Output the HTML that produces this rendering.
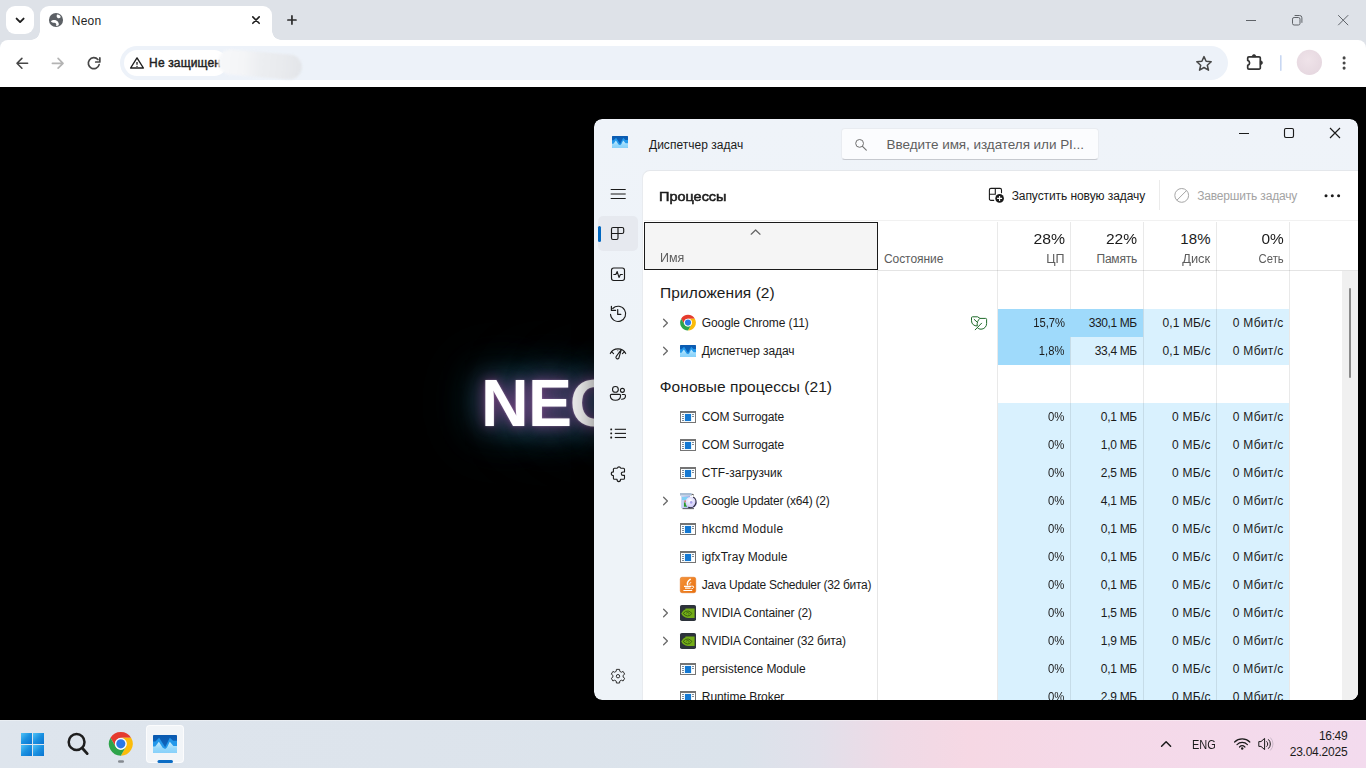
<!DOCTYPE html>
<html lang="ru">
<head>
<meta charset="utf-8">
<title>Neon</title>
<style>
*{box-sizing:border-box;margin:0;padding:0}
html,body{width:1366px;height:768px;overflow:hidden;background:#000;font-family:"Liberation Sans",sans-serif;}
.abs{position:absolute}
.t{position:absolute;white-space:nowrap;line-height:1}
svg{position:absolute;overflow:visible}
#tabstrip{left:0;top:0;width:1366px;height:50px;background:#dee2e8}
#toolbar{left:0;top:40px;width:1366px;height:47px;background:#fff;border-radius:8px 8px 0 0}
#tabsearch{left:6px;top:6px;width:28px;height:28px;border-radius:9px;background:#fff}
#tab{left:40px;top:6px;width:232px;height:34px;background:#fff;border-radius:9px 9px 0 0}
#tab:before,#tab:after{content:"";position:absolute;bottom:0;width:9px;height:9px}
#tab:before{left:-9px;background:radial-gradient(circle at 0 0,rgba(255,255,255,0) 8.500px,#fff 9px)}
#tab:after{right:-9px;background:radial-gradient(circle at 100% 0,rgba(255,255,255,0) 8.500px,#fff 9px)}
#omni{left:120px;top:46px;width:1107.500px;height:34px;border-radius:17px;background:#edf2f9}
#chip{left:124px;top:50px;width:103px;height:25.500px;border-radius:13px;background:#fff}
#blur{left:218px;top:52.300px;width:83.500px;height:25px;border-radius:12.500px;background:linear-gradient(90deg,#f7f8fa 0%,#f4f5f7 30%,#eceef1 50%,#e9ebee 75%,#e3e5e9 100%);filter:blur(1.200px);transform:rotate(4.800deg)}
#page{left:0;top:87px;width:1366px;height:633px;background:#000;overflow:hidden}
.neon{left:481px;top:283px;font-size:66px;font-weight:bold}
#neonA{color:transparent;text-shadow:0 0 38px rgba(0,175,190,.72),0 0 62px rgba(0,155,170,.58)}
#neonB{color:transparent;text-shadow:0 0 2px rgba(255,225,255,.4),0 0 12px rgba(200,75,170,.4),0 0 24px rgba(175,55,150,.65)}
#neon2{color:#fff}
#tm{left:0;top:0;width:1366px;height:768px;clip-path:inset(119px 8px 68px 594px round 8px)}
#taskbar{left:0;top:720px;width:1366px;height:48px;background:linear-gradient(90deg,#dee5ed 0%,#dde4ec 30%,#dbe3eb 54%,#e2e0ea 60%,#efdae6 65.500%,#f6d8e4 71%,#f5d9e8 80%,#f4daeb 90%,#f3dbee 100%);border-top:1px solid rgba(255,255,255,.35)}
#tmshadow{left:594px;top:119px;width:764px;height:581px;border-radius:8px;box-shadow:0 2px 16px 6px rgba(0,0,0,.28)}

</style>
</head>
<body>
<!-- CHROME -->
<div id="tabstrip" class="abs"></div>
<div id="toolbar" class="abs"></div>
<div id="tabsearch" class="abs"></div>
<div id="tab" class="abs"></div>
<div id="omni" class="abs"></div>
<div id="chip" class="abs"></div>
<svg style="left:0px;top:0px" width="320" height="87" viewBox="0 0 320 87" ><path d="M16.6 18.6 L20.1 22.1 L23.6 18.6" fill="none" stroke="#1f1f1f" stroke-width="1.9" stroke-linecap="round" stroke-linejoin="round"/><circle cx="56" cy="19.950" r="7.050" fill="#5c6065"/><path d="M57 14.600 C58.800 14.400 60.500 15.600 60.700 17.200 C59.900 18.200 58.600 18.500 57.600 18 C56.500 17.300 56.400 15.900 57 14.600Z" fill="#fff"/><path d="M50.800 21.300 C52.200 19.900 54.600 19.700 56.300 20.500 C58.200 21.400 59.100 23.300 58.800 25 C58 25.700 57 26 56.100 25.900 C56.800 24.300 55.900 23 54.300 22.800 C52.900 22.800 51.600 22.400 50.800 21.300Z" fill="#fff"/><path d="M252.800 16.900 L259.200 23.300 M259.200 16.900 L252.800 23.300" stroke="#1f1f1f" stroke-width="1.6" stroke-linecap="round"/><path d="M287.900 20 H296 M291.950 15.900 V24.100" stroke="#2b2b2b" stroke-width="1.7" stroke-linecap="round"/><path d="M27.6 63.3 H17.2 M21.9 58.4 L17 63.3 L21.9 68.2" fill="none" stroke="#474747" stroke-width="1.6" stroke-linecap="round" stroke-linejoin="round"/><path d="M52.4 63.3 H62.8 M58.1 58.4 L63 63.3 L58.1 68.2" fill="none" stroke="#b4b4b4" stroke-width="1.700" stroke-linecap="round" stroke-linejoin="round"/><path d="M99.150 64.600 A5.500 5.500 0 1 1 97.900 59.500" fill="none" stroke="#474747" stroke-width="1.700" stroke-linecap="round"/><path d="M99.850 57.900 V62 H95.700" fill="none" stroke="#474747" stroke-width="1.700" stroke-linecap="round" stroke-linejoin="round"/><path d="M137 57.900 L143.400 68 H130.600 Z" fill="none" stroke="#1f1f1f" stroke-width="1.4" stroke-linejoin="round"/><path d="M137 62 V64.8" stroke="#1f1f1f" stroke-width="1.3"/><circle cx="137" cy="66.4" r="0.7" fill="#1f1f1f"/></svg>
<div class="t" style="top:15px;font-size:12px;color:#1f1f1f;letter-spacing:0.20px;left:71.8px;">Neon</div>
<div class="t" style="top:57px;font-size:12px;color:#1f1f1f;letter-spacing:0.14px;left:149.1px;-webkit-text-stroke:0.450px #1f1f1f;">Не защищен</div>
<div id="blur" class="abs"></div>
<svg style="left:1180px;top:0px" width="186" height="87" viewBox="0 0 186 87" ><path d="M66 20.5 H76" stroke="#5f6368" stroke-width="1"/><rect x="112.5" y="17.5" width="7.5" height="7.5" rx="1.6" fill="none" stroke="#5f6368" stroke-width="1"/><path d="M114.6 15.5 H119.6 a2.3 2.3 0 0 1 2.3 2.3 V22.8" fill="none" stroke="#5f6368" stroke-width="1"/><path d="M158.2 15.2 L168.2 25.2 M168.2 15.2 L158.2 25.2" stroke="#5f6368" stroke-width="1"/><path d="M24 56.6 L26.1 61.3 L31.2 61.8 L27.3 65.2 L28.5 70.2 L24 67.5 L19.5 70.2 L20.7 65.2 L16.8 61.8 L21.9 61.3 Z" fill="none" stroke="#474747" stroke-width="1.5" stroke-linejoin="round"/><path d="M68.900 56.800 H79.100 a1.200 1.200 0 0 1 1.200 1.200 V67.900 a1.200 1.200 0 0 1 -1.200 1.200 H68.900 a1.200 1.200 0 0 1 -1.200 -1.200 V65.400 a2.600 2.600 0 0 0 0 -5 V58 a1.200 1.200 0 0 1 1.200 -1.200Z" fill="none" stroke="#333" stroke-width="1.700" stroke-linejoin="round"/><path d="M72.100 56.800 a1.900 2.400 0 0 1 3.800 0Z M80.300 60.800 a2.300 1.900 0 0 1 0 3.800Z" fill="#333" stroke="#333" stroke-width="0.600"/><rect x="100" y="55" width="1.6" height="16" rx="0.8" fill="#c8d7f2"/><defs><radialGradient id="av" cx="0.45" cy="0.4" r="0.6"><stop offset="0" stop-color="#efe3e9"/><stop offset="1" stop-color="#e6d8e0"/></radialGradient></defs><circle cx="129.4" cy="62.3" r="12.6" fill="url(#av)"/><circle cx="164.1" cy="57.9" r="1.55" fill="#474747"/><circle cx="164.1" cy="63" r="1.55" fill="#474747"/><circle cx="164.1" cy="68.1" r="1.55" fill="#474747"/></svg>
<!-- PAGE -->
<div id="page" class="abs"><div id="neonA" class="t neon"><span style="letter-spacing:-0.600px">N</span><span style="letter-spacing:-2.400px">E</span>ON</div><div id="neonB" class="t neon"><span style="letter-spacing:-0.600px">N</span><span style="letter-spacing:-2.400px">E</span>ON</div><div id="neon2" class="t neon"><span style="letter-spacing:-0.600px">N</span><span style="letter-spacing:-2.400px">E</span><span style="color:#e6e6e6">ON</span></div></div>
<!-- TASK MANAGER -->
<div id="tmshadow" class="abs"></div>
<div id="tm" class="abs">
<div class="abs" style="left:594px;top:119px;width:764px;height:581px;background:linear-gradient(180deg,#eff3f9 0%,#eef3f8 40%);border-radius:8px;"></div>
<div class="abs" style="left:642px;top:170px;width:716px;height:531px;background:#fff;border-radius:8px 0 0 0;border-top:1px solid #e4e7eb;border-left:1px solid #e8ebef;"></div>
<div class="abs" style="left:840.5px;top:128px;width:258.5px;height:31.5px;background:#fbfcfe;border-radius:4px;border:1px solid #e9ecf1;border-bottom:1px solid #c6c9cf;"></div>
<div class="abs" style="left:598px;top:216px;width:40px;height:35px;background:#e6e9ef;border-radius:5px;"></div>
<div class="abs" style="left:598px;top:226px;width:3px;height:16px;background:#0067c0;border-radius:1.5px;"></div>
<svg style="left:0px;top:0px" width="1366" height="768" viewBox="0 0 1366 768" ><defs><linearGradient id="tga" x1="0" y1="0" x2="0" y2="1"><stop offset="0" stop-color="#0a5ab0"/><stop offset="1" stop-color="#136bc3"/></linearGradient><linearGradient id="tla" x1="0" y1="0" x2="0" y2="1"><stop offset="0" stop-color="#c9eeff"/><stop offset="0.600" stop-color="#93d7fb"/><stop offset="1" stop-color="#88d1fa"/></linearGradient></defs><rect x="612" y="136" width="16" height="12" rx="0.50" fill="url(#tga)"/><path d="M612.00 140.30 L613.60 140.30 L616.10 137.80 L620.10 144.10 L623.20 137.80 L625.40 139.90 L628.00 139.90 L628.00 148.00 L612.00 148.00Z" fill="#2398ea"/><path d="M612.00 143.70 L613.50 143.70 L615.90 140.50 L618.50 144.50 L620.10 145.30 L621.30 144.30 L623.20 140.50 L625.60 143.30 L628.00 143.30 L628.00 147.60 Q628.00 148.00 627.60 148.00 L612.40 148.00 Q612.00 148.00 612.00 147.60Z" fill="url(#tla)"/><circle cx="859.6" cy="143.4" r="3.9" fill="none" stroke="#6f6f6f" stroke-width="1"/><path d="M862.5 146.3 L866.3 150.1" stroke="#6f6f6f" stroke-width="1.1" stroke-linecap="round"/><path d="M1239 133.500 H1249" stroke="#1b1b1b" stroke-width="1.150"/><rect x="1284.5" y="128.5" width="9" height="9" rx="1.400" fill="none" stroke="#1b1b1b" stroke-width="1.150"/><path d="M1330 128 L1340 138 M1340 128 L1330 138" stroke="#1b1b1b" stroke-width="1.150"/><path d="M610.700 189.500 H625.700 M610.700 194 H625.700 M610.700 198.500 H625.700" stroke="#1b1b1b" stroke-width="1.150"/><path d="M613 227.5 H622.2 a1.5 1.5 0 0 1 1.5 1.5 V232 a1.5 1.5 0 0 1 -1.5 1.5 H618 V238 a1.5 1.5 0 0 1 -1.5 1.5 H613 a1.5 1.5 0 0 1 -1.5 -1.5 V229 a1.5 1.5 0 0 1 1.5 -1.5Z M618 227.500 V233.500 M611.500 233.500 H618" fill="none" stroke="#1b1b1b" stroke-width="1.150"/><rect x="611.5" y="268" width="13" height="12.5" rx="2.200" fill="none" stroke="#1b1b1b" stroke-width="1.150"/><path d="M613.8 274.5 H615.8 L617.2 271.6 L619 277.4 L620.4 274.5 H622.400" fill="none" stroke="#1b1b1b" stroke-width="1.150" stroke-linejoin="round" stroke-linecap="round"/><path d="M610.500 314.300 A7.600 7.600 0 1 0 612.700 308.500" fill="none" stroke="#1b1b1b" stroke-width="1.100" stroke-linecap="round"/><path d="M611.400 306.300 V310.400 H615.600" fill="none" stroke="#1b1b1b" stroke-width="1.200" stroke-linecap="round" stroke-linejoin="round"/><path d="M617.700 309.500 V314.400 H620.800" fill="none" stroke="#1b1b1b" stroke-width="1.200" stroke-linecap="round" stroke-linejoin="round"/><path d="M610.300 353.600 A8.600 8.600 0 0 1 625.700 353.600" fill="none" stroke="#1b1b1b" stroke-width="1.100" stroke-linecap="round"/><path d="M611.600 351.800 L613.600 353.700 M624.400 351.800 L622.400 353.700" fill="none" stroke="#1b1b1b" stroke-width="1.100" stroke-linecap="round"/><path d="M617.800 349.200 V351.300" stroke="#7a7a7a" stroke-width="1"/><path d="M621.300 349.500 L616.300 356.300 a1.550 1.550 0 1 0 2.700 1.300 Z" fill="none" stroke="#1b1b1b" stroke-width="1.100" stroke-linejoin="round"/><circle cx="615.400" cy="389.400" r="2.900" fill="none" stroke="#1b1b1b" stroke-width="1.100"/><path d="M611.500 394.400 H619.400 a1.200 1.200 0 0 1 1.200 1.200 c0 3 -2.200 4.700 -5.150 4.700 s-5.150 -1.700 -5.150 -4.700 a1.200 1.200 0 0 1 1.200 -1.200Z" fill="none" stroke="#1b1b1b" stroke-width="1.100"/><circle cx="622.400" cy="390.350" r="2" fill="none" stroke="#1b1b1b" stroke-width="1.100"/><path d="M622.300 394.500 H624.300 a1.200 1.200 0 0 1 1.200 1.200 c0 2.200 -1.600 3.400 -3.900 3.600" fill="none" stroke="#1b1b1b" stroke-width="1.100" stroke-linecap="round"/><rect x="610.3" y="428.40000000000003" width="1.8" height="1.8" rx="0.5" fill="#1b1b1b"/><path d="M614.8 429.3 H626" stroke="#1b1b1b" stroke-width="1.1"/><rect x="610.3" y="432.5" width="1.8" height="1.8" rx="0.5" fill="#1b1b1b"/><path d="M614.8 433.4 H626" stroke="#1b1b1b" stroke-width="1.1"/><rect x="610.3" y="436.6" width="1.8" height="1.8" rx="0.5" fill="#1b1b1b"/><path d="M614.8 437.5 H626" stroke="#1b1b1b" stroke-width="1.1"/><path d="M614.400 468.200 H617.300 A1.800 1.900 0 0 1 620.700 468.200 H623.500 a1 1 0 0 1 1 1 V472 H623 a1.700 1.700 0 0 0 0 3.400 H624.500 V478.300 a1 1 0 0 1 -1 1 H620.600 A1.800 2.300 0 0 1 617 479.300 H614.400 a1 1 0 0 1 -1 -1 V475.500 A2.100 1.800 0 0 1 613.400 471.900 V469.200 a1 1 0 0 1 1 -1Z" fill="none" stroke="#1b1b1b" stroke-width="1.100" stroke-linejoin="round"/><path d="M619.57 669.38 L616.43 669.38 L616.22 671.31 L614.66 672.22 L612.88 671.43 L611.31 674.15 L612.88 675.30 L612.88 677.10 L611.31 678.25 L612.88 680.97 L614.66 680.18 L616.22 681.09 L616.43 683.02 L619.57 683.02 L619.78 681.09 L621.34 680.18 L623.12 680.97 L624.69 678.25 L623.12 677.10 L623.12 675.30 L624.69 674.15 L623.12 671.43 L621.34 672.22 L619.78 671.31Z" fill="none" stroke="#303030" stroke-width="1" stroke-linejoin="round"/><circle cx="618" cy="676.200" r="1.700" fill="none" stroke="#303030" stroke-width="1"/><path d="M993.700 200.400 H990.900 a1.500 1.500 0 0 1 -1.500 -1.500 V189.900 a1.500 1.500 0 0 1 1.500 -1.500 H1000 a1.500 1.500 0 0 1 1.500 1.500 V192.700 M995.300 188.400 V194.250 H989.400" fill="none" stroke="#1b1b1b" stroke-width="1.100" stroke-linecap="round"/><circle cx="999.600" cy="198.400" r="4.300" fill="#1b1b1b"/><path d="M997.100 198.400 H1002.100 M999.600 195.900 V200.900" stroke="#fff" stroke-width="1.100"/><path d="M1159.500 180 V210" stroke="#ebebeb" stroke-width="1"/><circle cx="1181.700" cy="195.400" r="6.900" fill="none" stroke="#a6a6a6" stroke-width="1"/><path d="M1186.600 190.500 L1176.800 200.300" stroke="#a6a6a6" stroke-width="1"/><circle cx="1326" cy="195.800" r="1.500" fill="#1b1b1b"/><circle cx="1332.3" cy="195.800" r="1.500" fill="#1b1b1b"/><circle cx="1338.6" cy="195.800" r="1.500" fill="#1b1b1b"/></svg>
<div class="t" style="top:139px;font-size:12px;color:#1b1b1b;letter-spacing:0.02px;left:649.0px;">Диспетчер задач</div>
<div class="t" style="top:138px;font-size:13.5px;color:#5f5f5f;letter-spacing:-0.05px;left:886.6px;">Введите имя, издателя или PI...</div>
<div class="t" style="top:190px;font-size:13.5px;color:#1b1b1b;left:658.7px;transform:scaleX(1.071);transform-origin:0 0;-webkit-text-stroke:0.550px #1b1b1b;">Процессы</div>
<div class="t" style="top:190px;font-size:12px;color:#1b1b1b;letter-spacing:-0.08px;left:1011.7px;">Запустить новую задачу</div>
<div class="t" style="top:190px;font-size:12px;color:#a3a3a3;letter-spacing:-0.18px;left:1197.2px;">Завершить задачу</div>
<div class="abs" style="left:644px;top:222px;width:234px;height:48px;background:#f5f5f5;border:1px solid #1a1a1a;"></div>
<div class="abs" style="left:1342px;top:271px;width:16px;height:430px;background:#f0f0f0;"></div>
<div class="abs" style="left:1349px;top:288px;width:2px;height:90px;background:#8a8a8a;border-radius:1px;"></div>
<div class="abs" style="left:998px;top:309px;width:145px;height:56px;background:#d9f1fe;"></div>
<div class="abs" style="left:1143px;top:309px;width:146px;height:56px;background:#d9f1fe;"></div>
<div class="abs" style="left:998px;top:403px;width:291px;height:300px;background:#d9f1fe;"></div>
<svg style="left:0px;top:0px" width="1366" height="768" viewBox="0 0 1366 768" ><path d="M878 270.500 H1358" stroke="#e4e4e4" stroke-width="1"/><path d="M644 220.500 H1358" stroke="#f1f1f1" stroke-width="1"/><path d="M877.500 270 V700" stroke="#e6e6e6" stroke-width="1"/><path d="M997.5 222 V700" stroke="rgba(0,0,0,0.085)" stroke-width="1"/><path d="M1070.5 222 V700" stroke="rgba(0,0,0,0.085)" stroke-width="1"/><path d="M1143.5 222 V700" stroke="rgba(0,0,0,0.085)" stroke-width="1"/><path d="M1216.5 222 V700" stroke="rgba(0,0,0,0.085)" stroke-width="1"/><path d="M1289.5 222 V700" stroke="rgba(0,0,0,0.085)" stroke-width="1"/><path d="M751.200 234.200 L755.600 230 L760 234.200" fill="none" stroke="#666" stroke-width="1.250" stroke-linecap="round" stroke-linejoin="round"/><path d="M663.6 319.2 L667.4 323.0 L663.6 326.8" fill="none" stroke="#6b6b6b" stroke-width="1.300" stroke-linecap="round" stroke-linejoin="round"/><path d="M663.6 347.2 L667.4 351.0 L663.6 354.8" fill="none" stroke="#6b6b6b" stroke-width="1.300" stroke-linecap="round" stroke-linejoin="round"/><path d="M663.6 497.2 L667.4 501.0 L663.6 504.8" fill="none" stroke="#6b6b6b" stroke-width="1.300" stroke-linecap="round" stroke-linejoin="round"/><path d="M663.6 609.2 L667.4 613.0 L663.6 616.8000000000001" fill="none" stroke="#6b6b6b" stroke-width="1.300" stroke-linecap="round" stroke-linejoin="round"/><path d="M663.6 637.2 L667.4 641.0 L663.6 644.8000000000001" fill="none" stroke="#6b6b6b" stroke-width="1.300" stroke-linecap="round" stroke-linejoin="round"/><path d="M681.16 318.65 A7.9 7.9 0 0 1 694.84 318.65 L688.00 318.65 A3.95 3.95 0 0 0 684.58 324.58 Z" fill="#e53b2e"/><path d="M694.84 318.65 A7.9 7.9 0 0 1 688.00 330.50 L691.42 324.58 A3.95 3.95 0 0 0 688.00 318.65 Z" fill="#fbbc0a"/><path d="M688.00 330.50 A7.9 7.9 0 0 1 681.16 318.65 L684.58 324.58 A3.95 3.95 0 0 0 691.42 324.58 Z" fill="#2da44a"/><circle cx="688" cy="322.6" r="3.87" fill="#fff"/><circle cx="688" cy="322.6" r="3.04" fill="#2a78e6"/><defs><linearGradient id="tgb" x1="0" y1="0" x2="0" y2="1"><stop offset="0" stop-color="#0a5ab0"/><stop offset="1" stop-color="#136bc3"/></linearGradient><linearGradient id="tlb" x1="0" y1="0" x2="0" y2="1"><stop offset="0" stop-color="#c9eeff"/><stop offset="0.600" stop-color="#93d7fb"/><stop offset="1" stop-color="#88d1fa"/></linearGradient></defs><rect x="680" y="345" width="16" height="12" rx="0.50" fill="url(#tgb)"/><path d="M680.00 349.30 L681.60 349.30 L684.10 346.80 L688.10 353.10 L691.20 346.80 L693.40 348.90 L696.00 348.90 L696.00 357.00 L680.00 357.00Z" fill="#2398ea"/><path d="M680.00 352.70 L681.50 352.70 L683.90 349.50 L686.50 353.50 L688.10 354.30 L689.30 353.30 L691.20 349.50 L693.60 352.30 L696.00 352.30 L696.00 356.60 Q696.00 357.00 695.60 357.00 L680.40 357.00 Q680.00 357.00 680.00 356.60Z" fill="url(#tlb)"/><rect x="680.5" y="411.5" width="15" height="11" fill="#fff" stroke="#747474" stroke-width="1"/><rect x="680" y="411" width="16" height="2" fill="#747474"/><rect x="684.3" y="413.5" width="7.400" height="8" fill="#d9f0fb"/><rect x="685" y="414" width="6" height="7" fill="#1478d2"/><rect x="682" y="414" width="2" height="1" fill="#7b8a99"/><rect x="682" y="416" width="2" height="1" fill="#7b8a99"/><rect x="682" y="418" width="2" height="1" fill="#7b8a99"/><rect x="682" y="420" width="2" height="1" fill="#7b8a99"/><rect x="692" y="414" width="2" height="1" fill="#7b8a99"/><rect x="692" y="416" width="2" height="1" fill="#7b8a99"/><rect x="680.5" y="439.5" width="15" height="11" fill="#fff" stroke="#747474" stroke-width="1"/><rect x="680" y="439" width="16" height="2" fill="#747474"/><rect x="684.3" y="441.5" width="7.400" height="8" fill="#d9f0fb"/><rect x="685" y="442" width="6" height="7" fill="#1478d2"/><rect x="682" y="442" width="2" height="1" fill="#7b8a99"/><rect x="682" y="444" width="2" height="1" fill="#7b8a99"/><rect x="682" y="446" width="2" height="1" fill="#7b8a99"/><rect x="682" y="448" width="2" height="1" fill="#7b8a99"/><rect x="692" y="442" width="2" height="1" fill="#7b8a99"/><rect x="692" y="444" width="2" height="1" fill="#7b8a99"/><rect x="680.5" y="467.5" width="15" height="11" fill="#fff" stroke="#747474" stroke-width="1"/><rect x="680" y="467" width="16" height="2" fill="#747474"/><rect x="684.3" y="469.5" width="7.400" height="8" fill="#d9f0fb"/><rect x="685" y="470" width="6" height="7" fill="#1478d2"/><rect x="682" y="470" width="2" height="1" fill="#7b8a99"/><rect x="682" y="472" width="2" height="1" fill="#7b8a99"/><rect x="682" y="474" width="2" height="1" fill="#7b8a99"/><rect x="682" y="476" width="2" height="1" fill="#7b8a99"/><rect x="692" y="470" width="2" height="1" fill="#7b8a99"/><rect x="692" y="472" width="2" height="1" fill="#7b8a99"/><rect x="680.5" y="523.5" width="15" height="11" fill="#fff" stroke="#747474" stroke-width="1"/><rect x="680" y="523" width="16" height="2" fill="#747474"/><rect x="684.3" y="525.5" width="7.400" height="8" fill="#d9f0fb"/><rect x="685" y="526" width="6" height="7" fill="#1478d2"/><rect x="682" y="526" width="2" height="1" fill="#7b8a99"/><rect x="682" y="528" width="2" height="1" fill="#7b8a99"/><rect x="682" y="530" width="2" height="1" fill="#7b8a99"/><rect x="682" y="532" width="2" height="1" fill="#7b8a99"/><rect x="692" y="526" width="2" height="1" fill="#7b8a99"/><rect x="692" y="528" width="2" height="1" fill="#7b8a99"/><rect x="680.5" y="551.5" width="15" height="11" fill="#fff" stroke="#747474" stroke-width="1"/><rect x="680" y="551" width="16" height="2" fill="#747474"/><rect x="684.3" y="553.5" width="7.400" height="8" fill="#d9f0fb"/><rect x="685" y="554" width="6" height="7" fill="#1478d2"/><rect x="682" y="554" width="2" height="1" fill="#7b8a99"/><rect x="682" y="556" width="2" height="1" fill="#7b8a99"/><rect x="682" y="558" width="2" height="1" fill="#7b8a99"/><rect x="682" y="560" width="2" height="1" fill="#7b8a99"/><rect x="692" y="554" width="2" height="1" fill="#7b8a99"/><rect x="692" y="556" width="2" height="1" fill="#7b8a99"/><rect x="680.5" y="663.5" width="15" height="11" fill="#fff" stroke="#747474" stroke-width="1"/><rect x="680" y="663" width="16" height="2" fill="#747474"/><rect x="684.3" y="665.5" width="7.400" height="8" fill="#d9f0fb"/><rect x="685" y="666" width="6" height="7" fill="#1478d2"/><rect x="682" y="666" width="2" height="1" fill="#7b8a99"/><rect x="682" y="668" width="2" height="1" fill="#7b8a99"/><rect x="682" y="670" width="2" height="1" fill="#7b8a99"/><rect x="682" y="672" width="2" height="1" fill="#7b8a99"/><rect x="692" y="666" width="2" height="1" fill="#7b8a99"/><rect x="692" y="668" width="2" height="1" fill="#7b8a99"/><rect x="680.5" y="691.5" width="15" height="11" fill="#fff" stroke="#747474" stroke-width="1"/><rect x="680" y="691" width="16" height="2" fill="#747474"/><rect x="684.3" y="693.5" width="7.400" height="8" fill="#d9f0fb"/><rect x="685" y="694" width="6" height="7" fill="#1478d2"/><rect x="682" y="694" width="2" height="1" fill="#7b8a99"/><rect x="682" y="696" width="2" height="1" fill="#7b8a99"/><rect x="682" y="698" width="2" height="1" fill="#7b8a99"/><rect x="682" y="700" width="2" height="1" fill="#7b8a99"/><rect x="692" y="694" width="2" height="1" fill="#7b8a99"/><rect x="692" y="696" width="2" height="1" fill="#7b8a99"/><defs><linearGradient id="ub" x1="0" y1="0" x2="1" y2="0"><stop offset="0" stop-color="#cfdaf5"/><stop offset="1" stop-color="#9fb0e6"/></linearGradient><radialGradient id="ucd" cx="0.4" cy="0.35" r="0.7"><stop offset="0" stop-color="#ffffff"/><stop offset="0.55" stop-color="#dcd9fb"/><stop offset="1" stop-color="#b9b3f0"/></radialGradient></defs><rect x="680" y="493" width="11.600" height="2.600" fill="#a9bdd4"/><rect x="681" y="495.6" width="9" height="12.600" fill="url(#ub)"/><rect x="682" y="497" width="6" height="3" fill="#7fd0f5"/><rect x="684.5" y="500.5" width="2.500" height="2" fill="#d9573a"/><rect x="684" y="502.5" width="3" height="4.200" fill="#2a9a2a"/><path d="M682.5 508.6 H694" stroke="#33333f" stroke-width="1.100" opacity="0.750"/><circle cx="691.2" cy="502.4" r="5.700" fill="url(#ucd)"/><path d="M693.2 497.1 A5.700 5.700 0 0 1 688.2 507.3" fill="none" stroke="#2c2c3a" stroke-width="1.200"/><circle cx="691.2" cy="502.4" r="1.300" fill="#a9a2ea"/><path d="M691.6 494.8 q1.200 -1 2.200 0.300" fill="none" stroke="#333" stroke-width="1"/><defs><linearGradient id="jva" x1="0" y1="0" x2="1" y2="1"><stop offset="0" stop-color="#f4933a"/><stop offset="1" stop-color="#e96f0c"/></linearGradient></defs><rect x="680.25" y="577.25" width="15.500" height="15.500" rx="1.800" fill="url(#jva)" stroke="#dd6a10" stroke-width="0.500"/><path d="M690.2 579.4 q-3.600 2.400 -2.600 5.300" fill="none" stroke="#fff" stroke-width="1.500" stroke-linecap="round"/><path d="M691 582.2 q-1.600 1.200 -1.200 2.400" fill="none" stroke="#fff" stroke-width="1"/><path d="M684 586.4 H691.4 M685 588.2 H690.6" stroke="#fff" stroke-width="1.300"/><path d="M683.4 590.5 H692.2" stroke="#fff" stroke-width="1.200"/><path d="M691.6 586 q2.600 -0.200 2 1.600 q-0.500 1 -2.200 1.200" fill="none" stroke="#fff" stroke-width="1"/><rect x="680" y="605" width="16" height="16" rx="1.800" fill="#2d333b"/><path d="M685.5 608.5 H694.6 V617.9 H687.8 Q683 617 681.2 613.4 Q683 610 685.5 609.2Z" fill="#74ae18"/><path d="M683.2 613.4 Q685.4 610.6 688.2 611 Q690.8 611.6 691.8 613.6 Q690 616.2 687.4 616 Q684.8 615.4 683.2 613.4Z" fill="none" stroke="#3b6210" stroke-width="1"/><path d="M686.2 613.3 q1 -1.200 2.400 -0.600 q1 0.800 0.200 1.800" fill="none" stroke="#3b6210" stroke-width="0.900"/><rect x="680" y="633" width="16" height="16" rx="1.800" fill="#2d333b"/><path d="M685.5 636.5 H694.6 V645.9 H687.8 Q683 645 681.2 641.4 Q683 638 685.5 637.2Z" fill="#74ae18"/><path d="M683.2 641.4 Q685.4 638.6 688.2 639 Q690.8 639.6 691.8 641.6 Q690 644.2 687.4 644 Q684.8 643.4 683.2 641.4Z" fill="none" stroke="#3b6210" stroke-width="1"/><path d="M686.2 641.3 q1 -1.200 2.400 -0.600 q1 0.800 0.200 1.800" fill="none" stroke="#3b6210" stroke-width="0.900"/><path d="M972.500 316.800 H977.600 L980 318.400 H985.600 a1 1 0 0 1 1 1 V323.600 a5.600 5.600 0 0 1 -5.600 5.600 c-1.600 0 -3 -.8 -3.800 -1.800" fill="none" stroke="#1f6b2a" stroke-width="1" stroke-linejoin="round"/><path d="M977.200 326 c-3 0 -5.700 -1.800 -5.700 -5.200 V317.800 a1 1 0 0 1 1 -1 M980 318.400 c-2 1.600 -3.200 4 -2.800 7.600" fill="none" stroke="#1f6b2a" stroke-width="1" stroke-linejoin="round"/><path d="M974.200 319.400 L976.800 321.800 M981.600 323.200 L975.200 329.800" stroke="#1f6b2a" stroke-width="1" stroke-linecap="round"/></svg>
<div class="abs" style="left:998px;top:309px;width:72px;height:56px;background:#9fdafb;"></div>
<div class="abs" style="left:1070px;top:309px;width:73px;height:28px;background:#9fdafb;"></div>
<div class="t" style="top:252px;font-size:12px;color:#5c5c5c;left:659.7px;transform:scaleX(1.040);transform-origin:0 0;">Имя</div>
<div class="t" style="top:253px;font-size:12px;color:#5c5c5c;letter-spacing:-0.05px;left:883.9px;">Состояние</div>
<div class="t" style="top:231px;font-size:15px;color:#1b1b1b;right:301.4px;transform:scaleX(1.052);transform-origin:100% 0;">28%</div>
<div class="t" style="top:253px;font-size:12px;color:#5c5c5c;right:301.4px;transform:scaleX(1.045);transform-origin:100% 0;">ЦП</div>
<div class="t" style="top:231px;font-size:15px;color:#1b1b1b;right:228.8px;transform:scaleX(1.036);transform-origin:100% 0;">22%</div>
<div class="t" style="top:253px;font-size:12px;color:#5c5c5c;letter-spacing:-0.22px;right:229.0px;">Память</div>
<div class="t" style="top:231px;font-size:15px;color:#1b1b1b;letter-spacing:0.13px;right:155.4px;">18%</div>
<div class="t" style="top:253px;font-size:12px;color:#5c5c5c;right:155.5px;transform:scaleX(1.069);transform-origin:100% 0;">Диск</div>
<div class="t" style="top:231px;font-size:15px;color:#1b1b1b;right:82.6px;transform:scaleX(1.028);transform-origin:100% 0;">0%</div>
<div class="t" style="top:253px;font-size:12px;color:#5c5c5c;right:82.6px;transform:scaleX(0.940);transform-origin:100% 0;">Сеть</div>
<div class="t" style="top:285px;font-size:15.5px;color:#1b1b1b;letter-spacing:0.05px;left:660.1px;">Приложения (2)</div>
<div class="t" style="top:379px;font-size:15.5px;color:#1b1b1b;letter-spacing:0.04px;left:659.8px;">Фоновые процессы (21)</div>
<div class="t" style="top:317px;font-size:12px;color:#1b1b1b;letter-spacing:-0.09px;left:701.8px;">Google Chrome (11)</div>
<div class="t" style="top:317px;font-size:12px;color:#1b1b1b;right:301.4px;transform:scaleX(0.937);transform-origin:100% 0;">15,7%</div>
<div class="t" style="top:317px;font-size:12px;color:#1b1b1b;letter-spacing:-0.40px;right:229.2px;">330,1 МБ</div>
<div class="t" style="top:317px;font-size:12px;color:#1b1b1b;letter-spacing:0.10px;right:155.4px;">0,1 МБ/с</div>
<div class="t" style="top:317px;font-size:12px;color:#1b1b1b;letter-spacing:0.33px;right:82.3px;">0 Мбит/с</div>
<div class="t" style="top:345px;font-size:12px;color:#1b1b1b;letter-spacing:-0.08px;left:701.8px;">Диспетчер задач</div>
<div class="t" style="top:345px;font-size:12px;color:#1b1b1b;right:301.4px;transform:scaleX(0.932);transform-origin:100% 0;">1,8%</div>
<div class="t" style="top:345px;font-size:12px;color:#1b1b1b;letter-spacing:-0.34px;right:229.1px;">33,4 МБ</div>
<div class="t" style="top:345px;font-size:12px;color:#1b1b1b;letter-spacing:0.10px;right:155.4px;">0,1 МБ/с</div>
<div class="t" style="top:345px;font-size:12px;color:#1b1b1b;letter-spacing:0.33px;right:82.3px;">0 Мбит/с</div>
<div class="t" style="top:411px;font-size:12px;color:#1b1b1b;letter-spacing:-0.14px;left:701.8px;">COM Surrogate</div>
<div class="t" style="top:411px;font-size:12px;color:#1b1b1b;right:301.4px;transform:scaleX(0.946);transform-origin:100% 0;">0%</div>
<div class="t" style="top:411px;font-size:12px;color:#1b1b1b;letter-spacing:-0.30px;right:229.1px;">0,1 МБ</div>
<div class="t" style="top:411px;font-size:12px;color:#1b1b1b;letter-spacing:0.28px;right:155.2px;">0 МБ/с</div>
<div class="t" style="top:411px;font-size:12px;color:#1b1b1b;letter-spacing:0.33px;right:82.3px;">0 Мбит/с</div>
<div class="t" style="top:439px;font-size:12px;color:#1b1b1b;letter-spacing:-0.14px;left:701.8px;">COM Surrogate</div>
<div class="t" style="top:439px;font-size:12px;color:#1b1b1b;right:301.4px;transform:scaleX(0.946);transform-origin:100% 0;">0%</div>
<div class="t" style="top:439px;font-size:12px;color:#1b1b1b;letter-spacing:-0.30px;right:229.1px;">1,0 МБ</div>
<div class="t" style="top:439px;font-size:12px;color:#1b1b1b;letter-spacing:0.28px;right:155.2px;">0 МБ/с</div>
<div class="t" style="top:439px;font-size:12px;color:#1b1b1b;letter-spacing:0.33px;right:82.3px;">0 Мбит/с</div>
<div class="t" style="top:467px;font-size:12px;color:#1b1b1b;letter-spacing:0.04px;left:701.8px;">CTF-загрузчик</div>
<div class="t" style="top:467px;font-size:12px;color:#1b1b1b;right:301.4px;transform:scaleX(0.946);transform-origin:100% 0;">0%</div>
<div class="t" style="top:467px;font-size:12px;color:#1b1b1b;letter-spacing:-0.30px;right:229.1px;">2,5 МБ</div>
<div class="t" style="top:467px;font-size:12px;color:#1b1b1b;letter-spacing:0.28px;right:155.2px;">0 МБ/с</div>
<div class="t" style="top:467px;font-size:12px;color:#1b1b1b;letter-spacing:0.33px;right:82.3px;">0 Мбит/с</div>
<div class="t" style="top:495px;font-size:12px;color:#1b1b1b;letter-spacing:-0.24px;left:701.8px;">Google Updater (x64) (2)</div>
<div class="t" style="top:495px;font-size:12px;color:#1b1b1b;right:301.4px;transform:scaleX(0.946);transform-origin:100% 0;">0%</div>
<div class="t" style="top:495px;font-size:12px;color:#1b1b1b;letter-spacing:-0.30px;right:229.1px;">4,1 МБ</div>
<div class="t" style="top:495px;font-size:12px;color:#1b1b1b;letter-spacing:0.28px;right:155.2px;">0 МБ/с</div>
<div class="t" style="top:495px;font-size:12px;color:#1b1b1b;letter-spacing:0.33px;right:82.3px;">0 Мбит/с</div>
<div class="t" style="top:523px;font-size:12px;color:#1b1b1b;letter-spacing:0.30px;left:701.8px;">hkcmd Module</div>
<div class="t" style="top:523px;font-size:12px;color:#1b1b1b;right:301.4px;transform:scaleX(0.946);transform-origin:100% 0;">0%</div>
<div class="t" style="top:523px;font-size:12px;color:#1b1b1b;letter-spacing:-0.30px;right:229.1px;">0,1 МБ</div>
<div class="t" style="top:523px;font-size:12px;color:#1b1b1b;letter-spacing:0.28px;right:155.2px;">0 МБ/с</div>
<div class="t" style="top:523px;font-size:12px;color:#1b1b1b;letter-spacing:0.33px;right:82.3px;">0 Мбит/с</div>
<div class="t" style="top:551px;font-size:12px;color:#1b1b1b;letter-spacing:0.05px;left:701.8px;">igfxTray Module</div>
<div class="t" style="top:551px;font-size:12px;color:#1b1b1b;right:301.4px;transform:scaleX(0.946);transform-origin:100% 0;">0%</div>
<div class="t" style="top:551px;font-size:12px;color:#1b1b1b;letter-spacing:-0.30px;right:229.1px;">0,1 МБ</div>
<div class="t" style="top:551px;font-size:12px;color:#1b1b1b;letter-spacing:0.28px;right:155.2px;">0 МБ/с</div>
<div class="t" style="top:551px;font-size:12px;color:#1b1b1b;letter-spacing:0.33px;right:82.3px;">0 Мбит/с</div>
<div class="t" style="top:579px;font-size:12px;color:#1b1b1b;letter-spacing:-0.29px;left:701.8px;">Java Update Scheduler (32 бита)</div>
<div class="t" style="top:579px;font-size:12px;color:#1b1b1b;right:301.4px;transform:scaleX(0.946);transform-origin:100% 0;">0%</div>
<div class="t" style="top:579px;font-size:12px;color:#1b1b1b;letter-spacing:-0.30px;right:229.1px;">0,1 МБ</div>
<div class="t" style="top:579px;font-size:12px;color:#1b1b1b;letter-spacing:0.28px;right:155.2px;">0 МБ/с</div>
<div class="t" style="top:579px;font-size:12px;color:#1b1b1b;letter-spacing:0.33px;right:82.3px;">0 Мбит/с</div>
<div class="t" style="top:607px;font-size:12px;color:#1b1b1b;letter-spacing:-0.13px;left:701.8px;">NVIDIA Container (2)</div>
<div class="t" style="top:607px;font-size:12px;color:#1b1b1b;right:301.4px;transform:scaleX(0.946);transform-origin:100% 0;">0%</div>
<div class="t" style="top:607px;font-size:12px;color:#1b1b1b;letter-spacing:-0.30px;right:229.1px;">1,5 МБ</div>
<div class="t" style="top:607px;font-size:12px;color:#1b1b1b;letter-spacing:0.28px;right:155.2px;">0 МБ/с</div>
<div class="t" style="top:607px;font-size:12px;color:#1b1b1b;letter-spacing:0.33px;right:82.3px;">0 Мбит/с</div>
<div class="t" style="top:635px;font-size:12px;color:#1b1b1b;letter-spacing:-0.17px;left:701.8px;">NVIDIA Container (32 бита)</div>
<div class="t" style="top:635px;font-size:12px;color:#1b1b1b;right:301.4px;transform:scaleX(0.946);transform-origin:100% 0;">0%</div>
<div class="t" style="top:635px;font-size:12px;color:#1b1b1b;letter-spacing:-0.30px;right:229.1px;">1,9 МБ</div>
<div class="t" style="top:635px;font-size:12px;color:#1b1b1b;letter-spacing:0.28px;right:155.2px;">0 МБ/с</div>
<div class="t" style="top:635px;font-size:12px;color:#1b1b1b;letter-spacing:0.33px;right:82.3px;">0 Мбит/с</div>
<div class="t" style="top:663px;font-size:12px;color:#1b1b1b;letter-spacing:-0.01px;left:701.8px;">persistence Module</div>
<div class="t" style="top:663px;font-size:12px;color:#1b1b1b;right:301.4px;transform:scaleX(0.946);transform-origin:100% 0;">0%</div>
<div class="t" style="top:663px;font-size:12px;color:#1b1b1b;letter-spacing:-0.30px;right:229.1px;">0,1 МБ</div>
<div class="t" style="top:663px;font-size:12px;color:#1b1b1b;letter-spacing:0.28px;right:155.2px;">0 МБ/с</div>
<div class="t" style="top:663px;font-size:12px;color:#1b1b1b;letter-spacing:0.33px;right:82.3px;">0 Мбит/с</div>
<div class="t" style="top:691px;font-size:12px;color:#1b1b1b;letter-spacing:-0.07px;left:701.8px;">Runtime Broker</div>
<div class="t" style="top:691px;font-size:12px;color:#1b1b1b;right:301.4px;transform:scaleX(0.946);transform-origin:100% 0;">0%</div>
<div class="t" style="top:691px;font-size:12px;color:#1b1b1b;letter-spacing:-0.30px;right:229.1px;">2,9 МБ</div>
<div class="t" style="top:691px;font-size:12px;color:#1b1b1b;letter-spacing:0.28px;right:155.2px;">0 МБ/с</div>
<div class="t" style="top:691px;font-size:12px;color:#1b1b1b;letter-spacing:0.33px;right:82.3px;">0 Мбит/с</div>
</div>
<!-- TASKBAR -->
<div id="taskbar" class="abs"></div>
<div class="abs" style="left:146px;top:725px;width:38px;height:38px;background:rgba(255,255,255,0.620);border-radius:4px;border:1px solid rgba(255,255,255,0.700);"></div>
<svg style="left:0px;top:0px" width="1366" height="768" viewBox="0 0 1366 768" ><defs><linearGradient id="wl" x1="0" y1="0" x2="1" y2="1"><stop offset="0" stop-color="#4fc3f7"/><stop offset="0.500" stop-color="#1a90e0"/><stop offset="1" stop-color="#0a74d1"/></linearGradient></defs><rect x="21" y="733" width="11" height="11" fill="url(#wl)"/><rect x="33" y="733" width="11" height="11" fill="url(#wl)"/><rect x="21" y="745" width="11" height="11" fill="url(#wl)"/><rect x="33" y="745" width="11" height="11" fill="url(#wl)"/><circle cx="76.600" cy="742" r="7.900" fill="none" stroke="#1e1e1e" stroke-width="2.500"/><path d="M82.400 748.200 L87.200 753.600" stroke="#1e1e1e" stroke-width="2.800" stroke-linecap="round"/><path d="M110.49 737.85 A11.9 11.9 0 0 1 131.11 737.85 L120.80 737.85 A5.95 5.95 0 0 0 115.65 746.77 Z" fill="#e53b2e"/><path d="M131.11 737.85 A11.9 11.9 0 0 1 120.80 755.70 L125.95 746.77 A5.95 5.95 0 0 0 120.80 737.85 Z" fill="#fbbc0a"/><path d="M120.80 755.70 A11.9 11.9 0 0 1 110.49 737.85 L115.65 746.77 A5.95 5.95 0 0 0 125.95 746.77 Z" fill="#2da44a"/><circle cx="120.8" cy="743.8" r="5.83" fill="#fff"/><circle cx="120.8" cy="743.8" r="4.58" fill="#2a78e6"/><rect x="118" y="760.300" width="6" height="2.400" rx="1.200" fill="#858a90"/><defs><linearGradient id="tgt" x1="0" y1="0" x2="0" y2="1"><stop offset="0" stop-color="#0a5ab0"/><stop offset="1" stop-color="#136bc3"/></linearGradient><linearGradient id="tlt" x1="0" y1="0" x2="0" y2="1"><stop offset="0" stop-color="#c9eeff"/><stop offset="0.600" stop-color="#93d7fb"/><stop offset="1" stop-color="#88d1fa"/></linearGradient></defs><rect x="153" y="735" width="24" height="18" rx="0.75" fill="url(#tgt)"/><path d="M153.00 741.45 L155.40 741.45 L159.15 737.70 L165.15 747.15 L169.80 737.70 L173.10 740.85 L177.00 740.85 L177.00 753.00 L153.00 753.00Z" fill="#2398ea"/><path d="M153.00 746.55 L155.25 746.55 L158.85 741.75 L162.75 747.75 L165.15 748.95 L166.95 747.45 L169.80 741.75 L173.40 745.95 L177.00 745.95 L177.00 752.40 Q177.00 753.00 176.40 753.00 L153.60 753.00 Q153.00 753.00 153.00 752.40Z" fill="url(#tlt)"/><rect x="157.500" y="760" width="15.500" height="3" rx="1.500" fill="#0b6cc4"/><path d="M1161.600 746.300 L1166.100 741.800 L1170.600 746.300" fill="none" stroke="#1b1b1b" stroke-width="1.500" stroke-linecap="round" stroke-linejoin="round"/><path d="M1234.600 742 A10.800 10.800 0 0 1 1249.800 742" fill="none" stroke="#1b1b1b" stroke-width="1.200" stroke-linecap="round"/><path d="M1237 744.600 A7.400 7.400 0 0 1 1247.400 744.600" fill="none" stroke="#1b1b1b" stroke-width="1.200" stroke-linecap="round"/><path d="M1239.500 747 A3.900 3.900 0 0 1 1244.900 747" fill="none" stroke="#1b1b1b" stroke-width="1.200" stroke-linecap="round"/><circle cx="1242.200" cy="748.500" r="1.200" fill="#1b1b1b"/><path d="M1258.800 741.600 H1261 L1264.600 738.400 V749.600 L1261 746.400 H1258.800 Z" fill="none" stroke="#1b1b1b" stroke-width="1" stroke-linejoin="round"/><path d="M1266.800 741.600 A3.200 3.200 0 0 1 1266.800 746.400" fill="none" stroke="#1b1b1b" stroke-width="1" stroke-linecap="round"/><path d="M1268.600 739.600 A6 6 0 0 1 1268.600 748.400" fill="none" stroke="#1b1b1b" stroke-width="1" stroke-linecap="round"/><path d="M1270.600 737.800 A8.800 8.800 0 0 1 1270.600 750.200" fill="none" stroke="#cbb9ca" stroke-width="1" stroke-linecap="round"/></svg>
<div class="t" style="top:739px;font-size:12px;color:#1b1b1b;left:1191.8px;transform:scaleX(0.919);transform-origin:0 0;">ENG</div>
<div class="t" style="top:730px;font-size:12px;color:#1b1b1b;letter-spacing:-0.38px;right:18.8px;">16:49</div>
<div class="t" style="top:746px;font-size:12px;color:#1b1b1b;letter-spacing:-0.25px;right:18.7px;">23.04.2025</div>
</body>
</html>
